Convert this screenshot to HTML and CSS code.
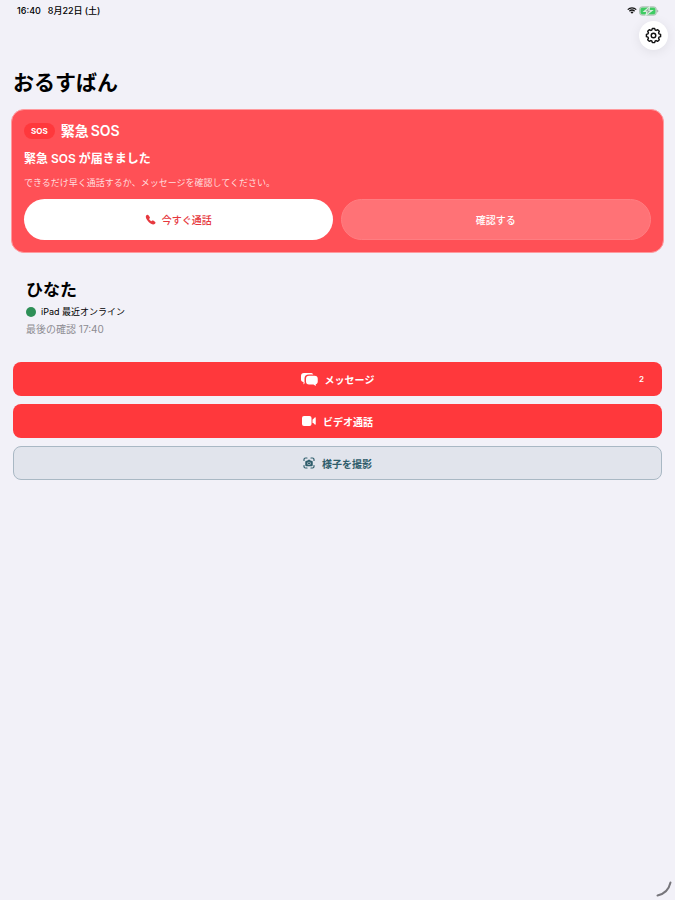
FILE: index.html
```html
<!DOCTYPE html>
<html lang="ja">
<head>
    <meta charset="UTF-8">
    <meta name="viewport" content="width=device-width, initial-scale=1.0">
    <title>おるすばん</title>
    <link rel="stylesheet" href="styles.css">
</head>
<body>
    <div class="status-bar">
        <span>16:40</span>
        <span class="date">8月22日<span class="weekday">(土)</span></span>
        <svg class="wifi" viewBox="0 0 20 14">
            <path d="M1.5 5.2a12.2 12.2 0 0 1 17 0M4.8 8.4a7.6 7.6 0 0 1 10.4 0" fill="none" stroke="#111" stroke-width="2.6"/>
            <path d="M10 13.5L7 10.6a4.3 4.3 0 0 1 6 0z" fill="#111"/>
        </svg>
        <svg class="battery" viewBox="0 0 38 18">
            <rect x="1" y="1" width="32" height="16" rx="5" fill="#b5dfc0" stroke="#a3b5aa" stroke-width="1.4"/>
            <rect x="3" y="3" width="28" height="12" rx="3" fill="#3ecb62"/>
            <path d="M34.500 6v6c3-1 3-5 0-6z" fill="#a3aaa8"/>
            <path d="M20 1L9.500 10h5.500l-2 7L25 8h-6z" fill="#fff" stroke="#d9f2df" stroke-width="2"/>
            <path d="M19 3L12.500 9.500h4l-1.500 5L22 8.500h-4.500z" fill="#8fa798"/>
        </svg>
    </div>

    <header>
        <button class="settings-button" aria-label="設定">
            <svg viewBox="0 0 24 24">
                <path d="M9.600 4.300L10.400 2h3.200l.8 2.300 1.350.56L17.940 3.800l2.260 2.260-1.060 2.190.56 1.350 2.300.8v3.200l-2.300.8-.56 1.350 1.060 2.190-2.260 2.260-2.190-1.060-1.350.56-.8 2.300h-3.200l-.8-2.300-1.350-.56-2.190 1.060-2.260-2.260 1.060-2.190-.56-1.350-2.300-.8v-3.200l2.300-.8.56-1.350L3.800 6.060 6.060 3.800l2.190 1.060z"/>
                <circle cx="12" cy="12" r="3.200"/>
            </svg>
        </button>
        <h1>おるすばん</h1>
    </header>

    <main>
        <section class="sos-card">
            <div class="sos-title">
                <span class="sos-badge">SOS</span>
                <h2>緊急<span class="latin">SOS</span></h2>
            </div>
            <h3>緊急<span class="latin">SOS</span>が届きました</h3>
            <p>できるだけ早く通話するか、メッセージを確認してください。</p>
            <div class="sos-buttons">
                <button class="call-button">
                    <svg viewBox="0 0 24 24"><path d="M2.500 3.500C4 1.500 6.500 1.200 8 3l2.300 3.500c.8 1.300.5 2.300-.6 3.200-.9.8-1 1.300-.3 2.200 1 1.300 2.200 2.400 3.400 3.300.9.700 1.500.6 2.200-.3.800-1 1.800-1.300 3-.6l3.700 2.500c2 1.500 1.300 3.800-.6 5.200C17.500 24 12.500 21.800 8 17.300 2.800 12.100.2 7 2.500 3.500z"/></svg>
                    今すぐ通話
                </button>
                <button class="confirm-button">確認する</button>
            </div>
        </section>

        <section class="person">
            <h2>ひなた</h2>
            <p class="online">iPad 最近オンライン</p>
            <p class="last-check">最後の確認 17:40</p>
        </section>

        <div class="actions">
            <button class="action-button">
                <svg class="message-icon" viewBox="0 0 34 26">
                    <path d="M6 0h13c3 0 5 1 5.500 3H16c-6 0-9 3-9 8v6c0 1 .2 2 .6 3L5 23v-5c-3 0-5-2-5-5V6c0-4 2-6 6-6z"/>
                    <path d="M16 5.500h11c4.500 0 6.500 2 6.500 6V17c0 3-1.500 5-4 5.500V26L25 23h-9c-4 0-6-2-6-6v-5.500c0-4 2-6 6-6z"/>
                </svg>
                メッセージ
                <span class="count">2</span>
            </button>
            <button class="action-button">
                <svg class="video-icon" viewBox="0 0 28 20">
                    <rect width="19" height="20" rx="4"/>
                    <path d="M21 7.500l4.500-4.500c1-.8 2-.4 2 1v12c0 1.400-1 1.800-2 1L21 12.500z"/>
                </svg>
                ビデオ通話
            </button>
            <button class="action-button photo-button">
                <svg class="photo-icon" viewBox="0 0 24 24">
                    <path d="M2 7V5q0-3 3-3h3M16 2h3q3 0 3 3v2M22 17v2q0 3-3 3h-3M8 22H5q-3 0-3-3v-2" fill="none" stroke="currentColor" stroke-width="2.400" stroke-linecap="round"/>
                    <path fill-rule="evenodd" d="M7 7.500h1.500l1.500-2h4l1.500 2H17q2.500 0 2.500 2.500v6q0 2.500-2.500 2.500H7q-2.500 0-2.500-2.500v-6q0-2.500 2.500-2.500zm5 2a3.300 3.300 0 1 0 0 6.600 3.300 3.300 0 0 0 0-6.600z"/>
                    <circle cx="12" cy="12.800" r="2.300"/>
                </svg>
                様子を撮影
            </button>
        </div>
    </main>

    <svg class="corner-mark" viewBox="0 0 16 16">
        <path d="M14.500 1.500C13 8 8.500 13 1.500 14.500"/>
    </svg>
</body>
</html>
```
FILE: styles.css
```css
* {
    box-sizing: border-box;
}

body {
    margin: 0;
    background-color: #f2f1f8;
    color: #000;
    font-family: Inter, "Noto Sans CJK JP", sans-serif;
}

h1, h2, h3, p {
    margin: 0;
}

button {
    border: none;
    font-family: inherit;
    cursor: pointer;
}

svg {
    fill: currentColor;
}

.status-bar {
    display: flex;
    align-items: center;
    height: 21px;
    padding: 0 16px 0 17px;
    font-size: 9px;
    font-weight: 500;
}

.date {
    margin-left: 7px;
}

.weekday {
    margin-left: 2px;
}

.wifi {
    width: 10px;
    height: 7px;
    margin-left: auto;
}

.battery {
    width: 20px;
    height: 10px;
    margin-left: 2px;
}

header {
    display: flex;
    flex-direction: column;
    padding: 0 7px 0 13px;
}

.settings-button {
    display: flex;
    align-items: center;
    justify-content: center;
    align-self: flex-end;
    width: 29px;
    height: 29px;
    padding: 0;
    border-radius: 50%;
    background-color: #fff;
    color: #111;
    box-shadow: 0 2px 12px rgba(0, 0, 0, 0.08);
}

.settings-button svg {
    width: 17px;
    height: 17px;
    fill: none;
    stroke: currentColor;
    stroke-width: 2;
    stroke-linejoin: round;
}

h1 {
    margin-top: 17px;
    font-size: 21px;
    line-height: 32px;
}

.sos-card {
    margin: 10px 11px 0;
    padding: 12px;
    border: 1px solid #ff9a9e;
    border-radius: 13px;
    background-color: #ff5056;
    color: #fff;
}

.sos-title {
    display: flex;
    align-items: center;
    gap: 6px;
}

.sos-badge {
    padding: 0 7px;
    border-radius: 8px;
    background-color: #ff383c;
    font-size: 8px;
    font-weight: 700;
    line-height: 16px;
}

.sos-title h2 {
    font-size: 14px;
    font-weight: 600;
    line-height: 18px;
}

.latin {
    margin: 0 2px;
}

.sos-card h3 {
    margin-top: 10px;
    font-size: 12px;
    font-weight: 600;
    line-height: 18px;
}

.sos-card h3 .latin {
    margin: 0 3px;
}

.sos-card p {
    margin-top: 8px;
    color: #ffdcdd;
    font-size: 9px;
    line-height: 14px;
}

.sos-buttons {
    display: flex;
    gap: 8px;
    margin-top: 9px;
}

.sos-buttons button {
    display: flex;
    flex: 1;
    align-items: center;
    justify-content: center;
    gap: 6px;
    height: 41px;
    border-radius: 21px;
    font-size: 10px;
    font-weight: 500;
}

.call-button {
    background-color: #fff;
    color: #e6383e;
}

.call-button svg {
    width: 11px;
    height: 11px;
}

.confirm-button {
    border: 1px solid #ff7d81;
    background-color: #ff7276;
    color: #fff;
}

.person {
    padding: 25px 26px 0;
}

.person h2 {
    font-size: 17px;
    line-height: 24px;
}

.online {
    display: flex;
    align-items: center;
    gap: 5px;
    margin-top: 2px;
    font-size: 9px;
    line-height: 16px;
}

.online::before {
    content: "";
    width: 10px;
    height: 10px;
    border-radius: 50%;
    background-color: #2e8f57;
}

.last-check {
    color: #8d8c92;
    font-size: 10px;
    line-height: 18px;
}

.actions {
    display: flex;
    flex-direction: column;
    gap: 8px;
    padding: 24px 13px 0;
}

.action-button {
    position: relative;
    display: flex;
    align-items: center;
    justify-content: center;
    gap: 7px;
    height: 34px;
    border-radius: 8px;
    background-color: #ff383c;
    color: #fff;
    font-size: 10px;
    font-weight: 700;
}

.photo-button {
    border: 1px solid #a9b8c4;
    background-color: #e1e4ec;
    color: #2f5d6b;
}

.message-icon {
    width: 17px;
    height: 13px;
}

.video-icon {
    width: 14px;
    height: 10px;
}

.photo-icon {
    width: 12px;
    height: 12px;
}

/* unread messages */
.count {
    position: absolute;
    right: 18px;
    font-size: 8px;
    font-weight: 600;
}

.corner-mark {
    position: fixed;
    right: 3px;
    bottom: 3px;
    width: 16px;
    height: 16px;
    fill: none;
    stroke: #77767b;
    stroke-width: 2;
    stroke-linecap: round;
}
```
